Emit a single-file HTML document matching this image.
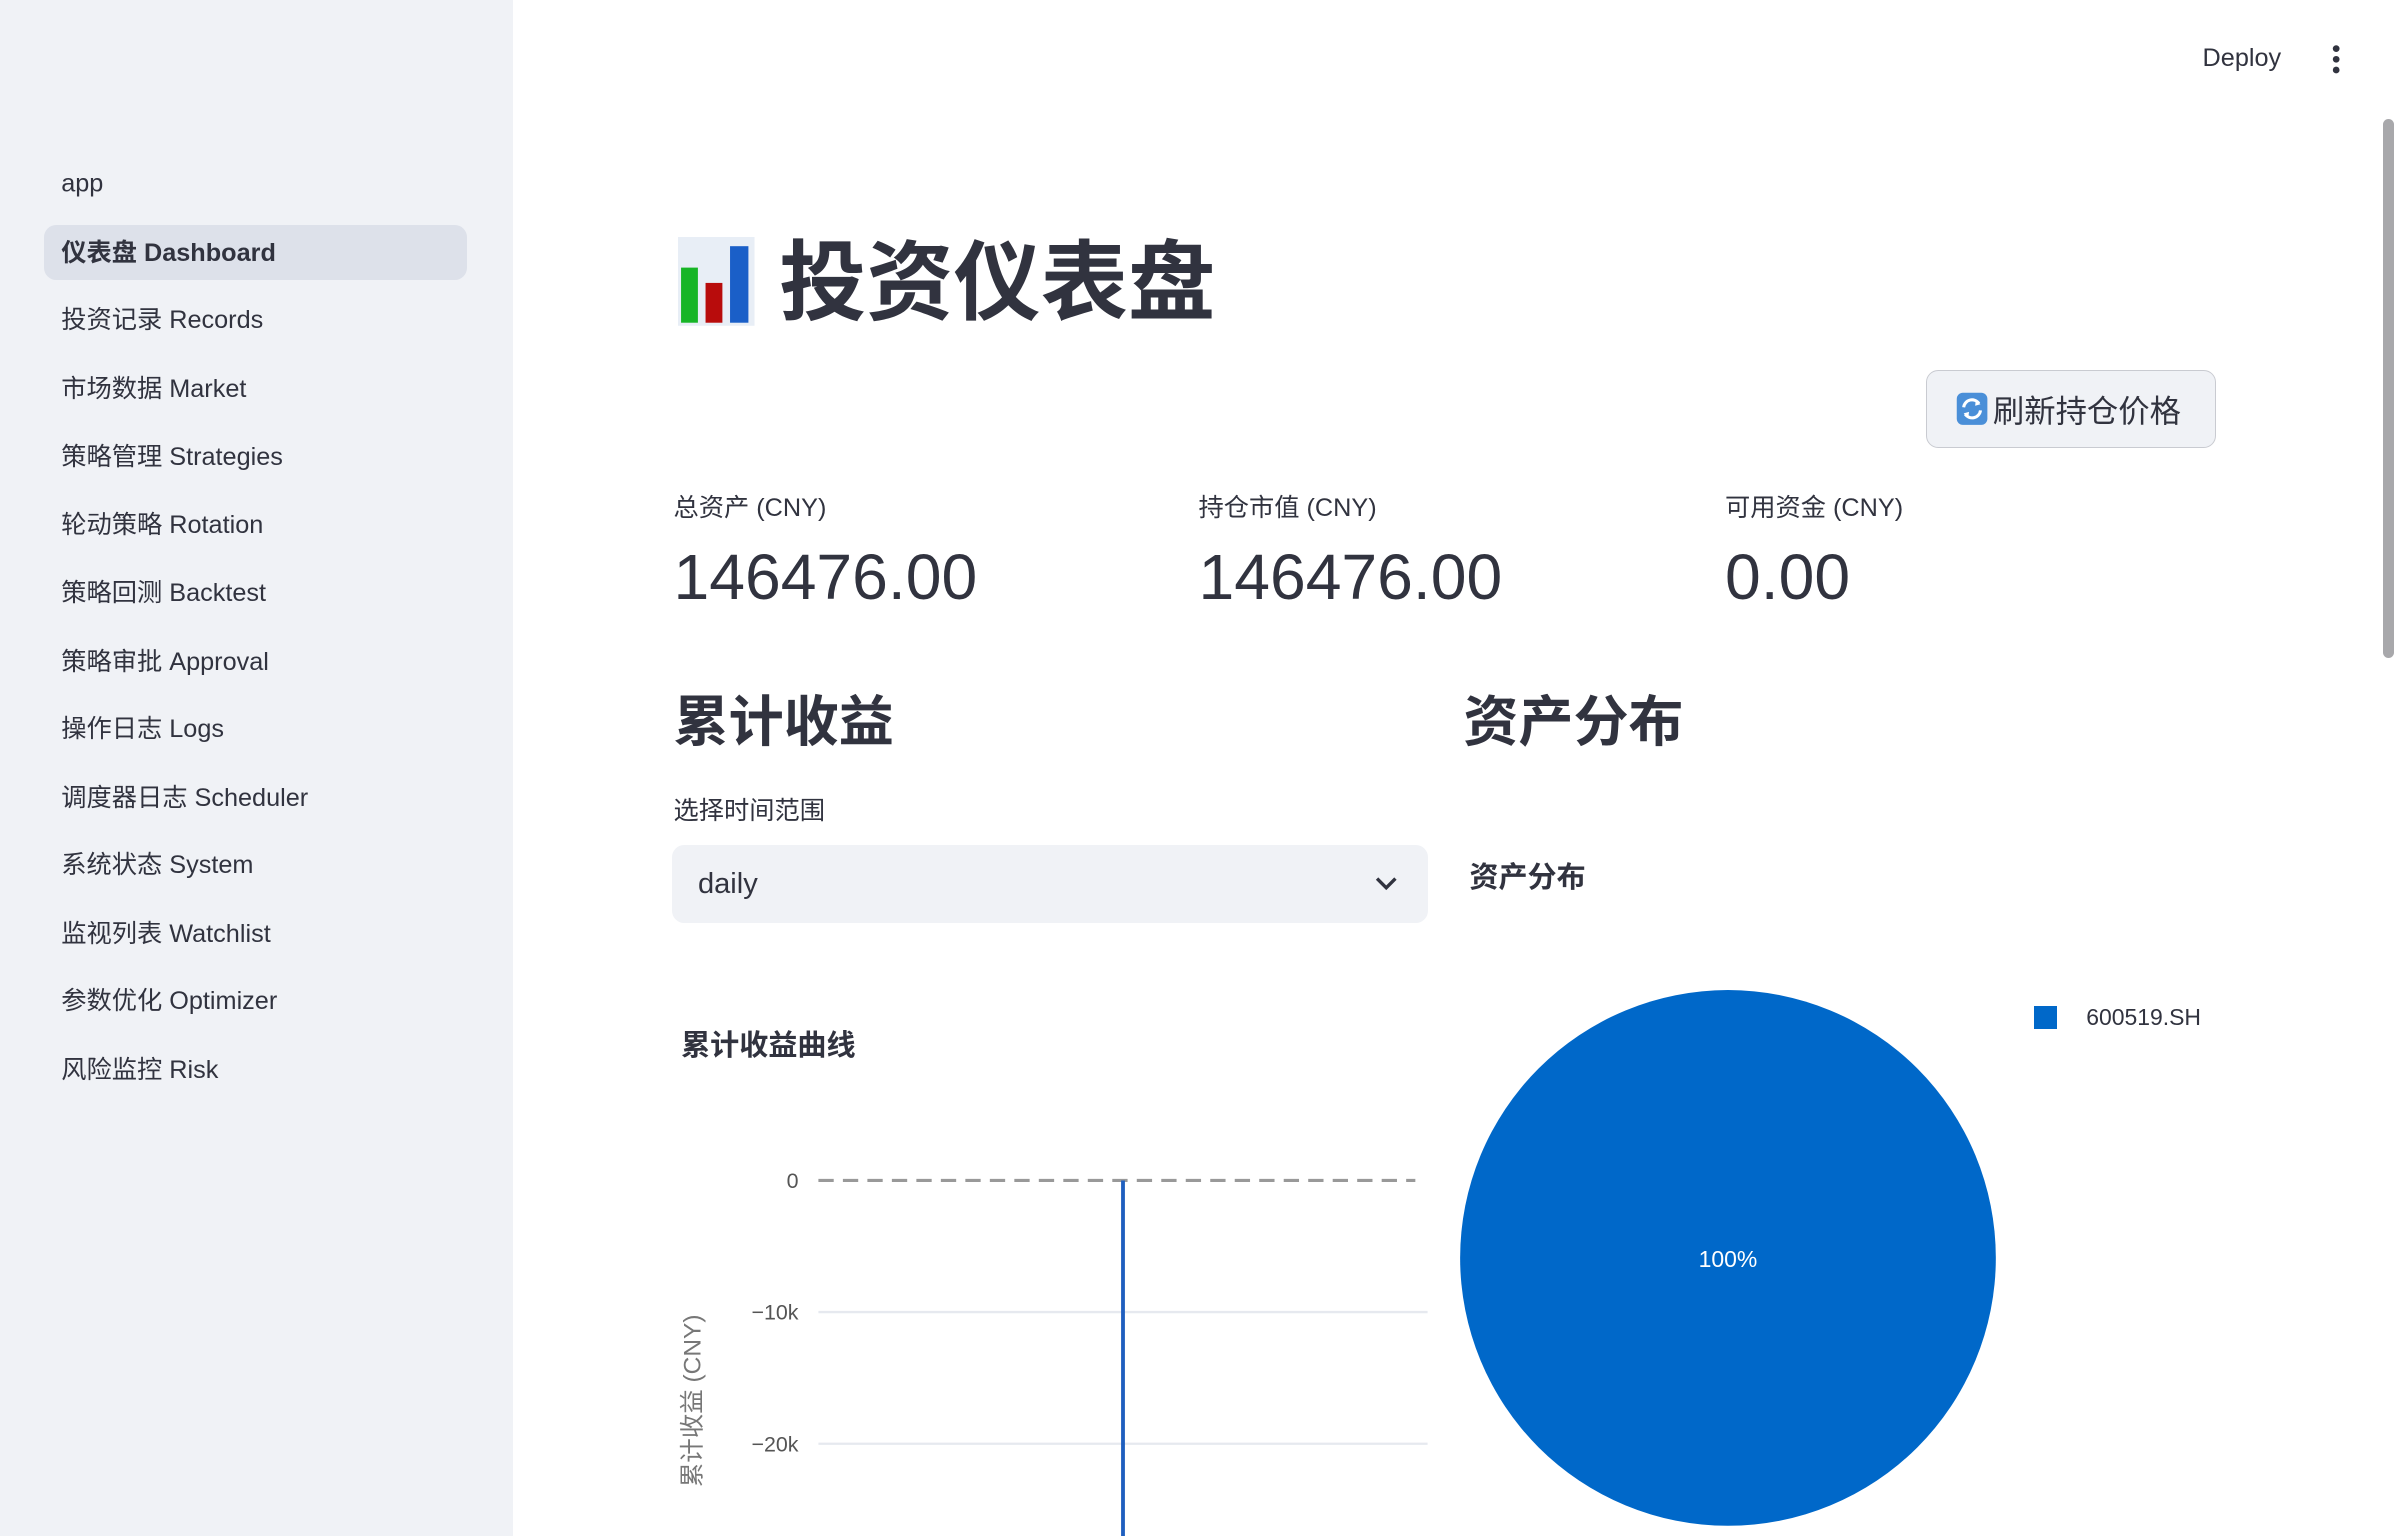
<!DOCTYPE html>
<html><head><meta charset="utf-8"><style>
*{margin:0;padding:0;box-sizing:border-box}
html,body{width:2400px;height:1536px;overflow:hidden;background:#fff}
#w{zoom:1.530612;width:1568px;height:1004px;position:relative;font-family:"Liberation Sans","Noto Sans CJK SC",sans-serif;color:#31333f}
.a{position:absolute;white-space:nowrap}
#sb{position:absolute;left:0;top:0;width:335px;height:1004px;background:#f0f2f6}
.it{position:absolute;left:40px;font-size:16.5px;color:#31333f;transform:translateY(-50%)}
</style></head><body><div id="w">
<div id="sb">
<div class="it" style="top:120px">app</div>
<div class="a" style="left:29px;top:147px;width:276px;height:36px;background:#dde1ea;border-radius:8px"></div>
<div class="it" style="top:164px;font-weight:bold">仪表盘 Dashboard</div>
<div class="it" style="top:208px">投资记录 Records</div>
<div class="it" style="top:253px">市场数据 Market</div>
<div class="it" style="top:297px">策略管理 Strategies</div>
<div class="it" style="top:342px">轮动策略 Rotation</div>
<div class="it" style="top:386px">策略回测 Backtest</div>
<div class="it" style="top:431px">策略审批 Approval</div>
<div class="it" style="top:475px">操作日志 Logs</div>
<div class="it" style="top:520px">调度器日志 Scheduler</div>
<div class="it" style="top:564px">系统状态 System</div>
<div class="it" style="top:609px">监视列表 Watchlist</div>
<div class="it" style="top:653px">参数优化 Optimizer</div>
<div class="it" style="top:698px">风险监控 Risk</div>
</div>
<div class="a" style="left:1439px;top:29px;font-size:16.5px">Deploy</div>
<svg class="a" style="left:1520px;top:29px" width="12" height="22"><circle cx="6" cy="3" r="2.2" fill="#31333f"/><circle cx="6" cy="10" r="2.2" fill="#31333f"/><circle cx="6" cy="17" r="2.2" fill="#31333f"/></svg>
<div class="a" style="left:1557px;top:78px;width:7px;height:352px;background:#a8a8ab;border-radius:4px"></div>
<svg class="a" style="left:443px;top:155px" width="50" height="58"><rect width="50" height="58" fill="#e8eef6"/><rect x="2" y="20" width="11" height="36" fill="#17b526"/><rect x="18" y="30" width="11" height="26" fill="#b80c0c"/><rect x="34" y="6" width="12" height="50" fill="#1a5fc8"/></svg>
<div class="a" style="left:509px;top:148px;font-size:57px;font-weight:bold;line-height:75px">投资仪表盘</div>
<div class="a" style="left:1258px;top:242px;width:190px;height:51px;border:1px solid #c9cbd1;border-radius:8px;background:#f0f2f6"></div>
<svg class="a" style="left:1278px;top:256px" width="21" height="22"><rect x="0.5" y="0.5" width="20" height="21" rx="4" fill="#4a8fd8"/><path d="M5 10a5.5 5.5 0 0 1 10-2.5M16 12a5.5 5.5 0 0 1-10 2.5" stroke="#fff" stroke-width="2" fill="none"/><path d="M13 5l3 3-3.5 1z M8 17l-3-3 3.5-1z" fill="#fff"/></svg>
<div class="a" style="left:1302px;top:253px;font-size:20.5px">刷新持仓价格</div>
<div class="a" style="left:440px;top:319px;font-size:16.5px">总资产 (CNY)</div>
<div class="a" style="left:783px;top:319px;font-size:16.5px">持仓市值 (CNY)</div>
<div class="a" style="left:1127px;top:319px;font-size:16.5px">可用资金 (CNY)</div>
<div class="a" style="left:440px;top:353px;font-size:42px">146476.00</div>
<div class="a" style="left:783px;top:353px;font-size:42px">146476.00</div>
<div class="a" style="left:1127px;top:353px;font-size:42px">0.00</div>
<div class="a" style="left:440px;top:442px;font-size:36px;font-weight:bold">累计收益</div>
<div class="a" style="left:956px;top:442px;font-size:36px;font-weight:bold">资产分布</div>
<div class="a" style="left:440px;top:517px;font-size:16.5px">选择时间范围</div>
<div class="a" style="left:439px;top:552px;width:494px;height:51px;background:#f0f2f6;border-radius:8px;font-size:19px;line-height:51px;padding-left:17px">daily</div>
<svg class="a" style="left:898px;top:571px" width="16" height="12"><path d="M2 3l6 6 6-6" stroke="#31333f" stroke-width="2.2" fill="none"/></svg>
<div class="a" style="left:960px;top:558px;font-size:19px;font-weight:bold">资产分布</div>
<div class="a" style="left:445px;top:668px;font-size:19px;font-weight:bold">累计收益曲线</div>
<svg class="a" style="left:440px;top:740px" width="500" height="264">
<line x1="95" y1="31" x2="485" y2="31" stroke="#999" stroke-width="2" stroke-dasharray="10,6"/>
<line x1="95" y1="117" x2="493" y2="117" stroke="#e6e9ef" stroke-width="1.5"/>
<line x1="95" y1="203" x2="493" y2="203" stroke="#e6e9ef" stroke-width="1.5"/>
<line x1="294" y1="31" x2="294" y2="264" stroke="#1f5fbf" stroke-width="2.5"/>
<g font-family="Liberation Sans,sans-serif" font-size="14" fill="#555" text-anchor="end"><text x="82" y="36">0</text><text x="82" y="122">−10k</text><text x="82" y="208">−20k</text></g>
<text transform="translate(18,175) rotate(-90)" text-anchor="middle" font-size="16" fill="#777" font-family="Liberation Sans,Noto Sans CJK SC,sans-serif">累计收益 (CNY)</text>
</svg>
<svg class="a" style="left:950px;top:645px" width="360" height="359"><circle cx="179" cy="177" r="175" fill="#0068c9"/><text x="179" y="183" fill="#fff" font-size="15" text-anchor="middle" font-family="Liberation Sans,sans-serif">100%</text></svg>
<div class="a" style="left:1329px;top:657px;width:15px;height:15px;background:#0068c9"></div>
<div class="a" style="left:1363px;top:656px;font-size:15px">600519.SH</div>
</div></body></html>
